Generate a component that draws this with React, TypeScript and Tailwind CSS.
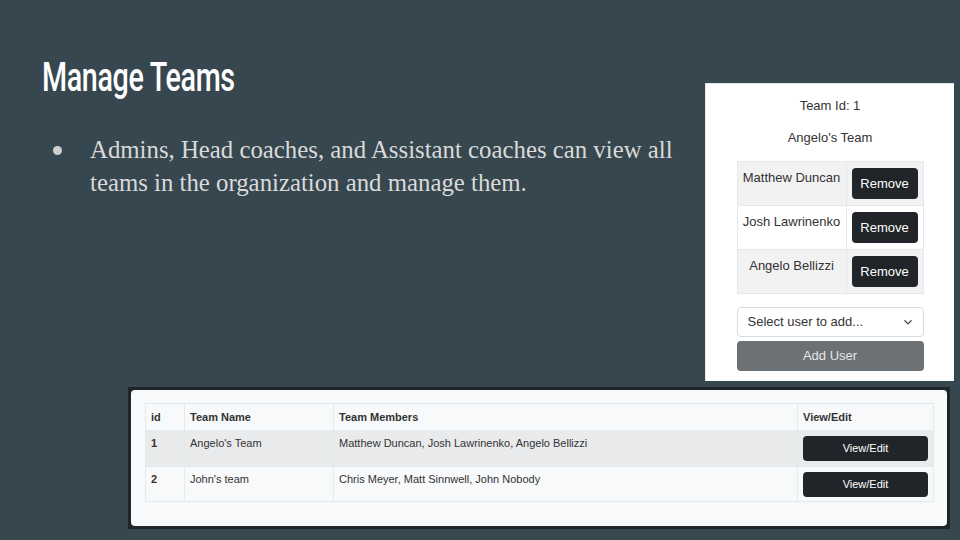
const members = ['Matthew Duncan', 'Josh Lawrinenko', 'Angelo Bellizzi']

const teams = [
  { id: 1, name: "Angelo's Team", members: 'Matthew Duncan, Josh Lawrinenko, Angelo Bellizzi' },
  { id: 2, name: "John's team", members: 'Chris Meyer, Matt Sinnwell, John Nobody' },
]

function TeamPanel() {
  return (
    <div className="w-[249px] h-[298px] mt-[83px] bg-white border-t border-l border-[#e3e8ee] flex flex-col items-center text-[13px] text-[#333] font-['Liberation_Sans',sans-serif]">
      <div className="mt-[14px] leading-[16px]">Team Id: 1</div>
      <div className="mt-[16px] leading-[16px]">Angelo's Team</div>

      {/* Members */}
      <table className="mt-[15px] w-[187px] border-collapse">
        <tbody>
          {members.map((m, i) => (
            <tr key={m} className={i % 2 === 0 ? 'bg-[#f2f2f2]' : 'bg-white'}>
              <td className="w-[109px] h-[44px] border border-[#e4e8ec] text-center align-top pt-[8px] leading-[16px] whitespace-nowrap">
                {m}
              </td>
              <td className="border border-[#e4e8ec] px-[5px] align-middle">
                <button className="w-[66px] h-[31px] rounded-[4px] bg-[#212529] text-white text-[13px]">Remove</button>
              </td>
            </tr>
          ))}
        </tbody>
      </table>

      <div className="mt-[13px] w-[187px] h-[30px] rounded-[4px] border border-[#d8dde2] flex items-center justify-between pl-[10px] pr-[10px]">
        <span>Select user to add...</span>
        <svg viewBox="0 0 16 16" className="w-[10px] h-[10px]" fill="none" stroke="#444" strokeWidth="2">
          <path d="M3 6l5 5 5-5" strokeLinecap="round" strokeLinejoin="round" />
        </svg>
      </div>
      <button className="mt-[4px] w-[187px] h-[30px] rounded-[4px] bg-[#6c7176] text-[#e6e6e6] text-[13px]">Add User</button>
    </div>
  )
}

function TeamsTable() {
  return (
    <div className="ml-[128px] w-[822px] h-[142px] border-[3px] border-[#1f2528] bg-[#1f2528]">
      <div className="w-full h-full bg-[#f8f9fa] rounded-[4px] pt-[13px] pl-[14px] font-['Liberation_Sans',sans-serif] text-[11px] text-[#333]">
        <table className="w-[789px] border-collapse">
          <thead>
            <tr>
              <th className="w-[39px] h-[27px] border border-[#e6e9ec] text-left font-bold pl-[5px]">id</th>
              <th className="w-[149px] border border-[#e6e9ec] text-left font-bold pl-[5px]">Team Name</th>
              <th className="w-[464px] border border-[#e6e9ec] text-left font-bold pl-[5px]">Team Members</th>
              <th className="border border-[#e6e9ec] text-left font-bold pl-[5px]">View/Edit</th>
            </tr>
          </thead>
          <tbody>
            {teams.map((t, i) => (
              <tr key={t.id} className={i === 0 ? 'bg-[#e9eaec]' : 'bg-[#f8f9fa]'}>
                <td className={`${i === 0 ? 'h-[36px]' : 'h-[35px]'} border border-[#e6e9ec] align-top pt-[4px] pl-[5px] font-bold`}>{t.id}</td>
                <td className="border border-[#e6e9ec] align-top pt-[4px] pl-[5px]">{t.name}</td>
                <td className="border border-[#e6e9ec] align-top pt-[4px] pl-[5px]">{t.members}</td>
                <td className="border border-[#e6e9ec] align-middle px-[5px]">
                  <button className="w-[125px] h-[25px] rounded-[4px] bg-[#212529] text-white text-[11px]">View/Edit</button>
                </td>
              </tr>
            ))}
          </tbody>
        </table>
      </div>
    </div>
  )
}

export default function App() {
  return (
    <div className="w-[960px] h-[540px] bg-[#37474f] flex flex-col overflow-hidden">
      <div className="flex">
        {/* Left: title + bullet */}
        <div className="flex-1 pl-[42px] pt-[53px]">
          <h1 className="font-['Roboto',sans-serif] font-medium text-[41px] leading-[48px] text-white origin-left scale-x-[0.7] tracking-[-0.5px]">
            Manage Teams
          </h1>
          <div className="flex mt-[32px] font-['Liberation_Serif',serif] text-[24.8px] leading-[33px] text-[#dadada]">
            <span className="w-[9px] h-[9px] rounded-full bg-[#cfcfcf] mt-[13px] ml-[11px] mr-[28px] shrink-0" />
            <p>
              Admins, Head coaches, and Assistant coaches can view all
              <br />
              teams in the organization and manage them.
            </p>
          </div>
        </div>
        <div className="mr-[6px]">
          <TeamPanel />
        </div>
      </div>
      <div className="mt-[6px]">
        <TeamsTable />
      </div>
    </div>
  )
}
